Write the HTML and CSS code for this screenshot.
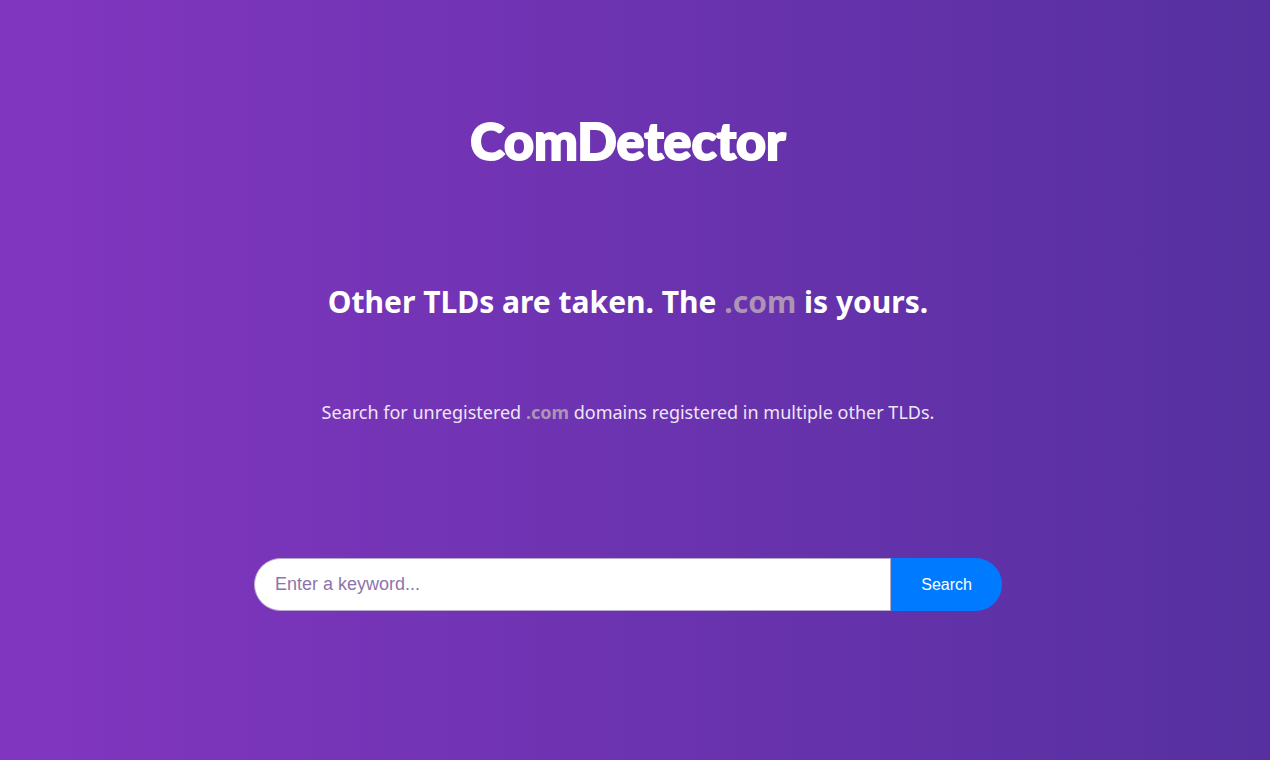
FILE: index.html
```html
<!DOCTYPE html>
<html lang="en">
<head>
    <meta charset="UTF-8">
    <meta name="viewport" content="width=device-width, initial-scale=1.0">
    <title>ComDetector</title>
    <link rel="stylesheet" href="styles.css">
</head>
<body>
  <main class="container">
    <h1 class="logo">ComDetector</h1>
    <h2 class="headline">Other TLDs are taken. The <span class="com">.com</span> is yours.</h2>
    <p class="intro">Search for unregistered <strong class="com">.com</strong> domains registered in multiple other TLDs.</p>
    <form class="search">
      <input type="text" class="keyword" name="keyword" placeholder="Enter a keyword..." aria-label="Keyword">
      <button type="submit" class="submit">Search</button>
    </form>
  </main>
</body>
</html>
```

FILE: styles.css
```css
* {
    box-sizing: border-box;
}

body {
    margin: 0;
    min-height: 100vh;
    padding-right: 14px;
    background: linear-gradient(90deg, #8236c0, #5630a0);
    font-family: "Noto Sans", "Open Sans", sans-serif;
    color: #fff;
}

.container {
    display: flex;
    flex-direction: column;
    align-items: center;
    padding: 110px 20px 40px;
    text-align: center;
}

.logo {
    margin: 0 0 112px;
    font-family: Lato, sans-serif;
    font-size: 52px;
    font-weight: 900;
    line-height: 60px;
    -webkit-text-stroke: 2px #fff;
}

.headline {
    margin: 0 0 75px;
    font-size: 30px;
    line-height: 40px;
}

.intro {
    margin: 0 0 131px;
    font-size: 18px;
    line-height: 30px;
    color: #eee6f6;
}

.com {
    color: #ad94b4;
}

.search {
    display: flex;
    width: 100%;
    max-width: 748px;
}

.keyword {
    flex: 1;
    min-width: 0;
    padding: 15px 20px;
    border: 1px solid #b9aacb;
    border-radius: 27px 0 0 27px;
    background: #fff;
    font-family: "Liberation Sans", Arial, sans-serif;
    font-size: 18px;
    line-height: 21px;
}

.keyword::placeholder {
    color: #8e74ac;
    opacity: 1;
}

.submit {
    padding: 15px 30px;
    border: 0;
    border-radius: 0 27px 27px 0;
    background: #007bff;
    color: #fff;
    font-family: "Liberation Sans", Arial, sans-serif;
    font-size: 16px;
    line-height: 22px;
    cursor: pointer;
}
```
